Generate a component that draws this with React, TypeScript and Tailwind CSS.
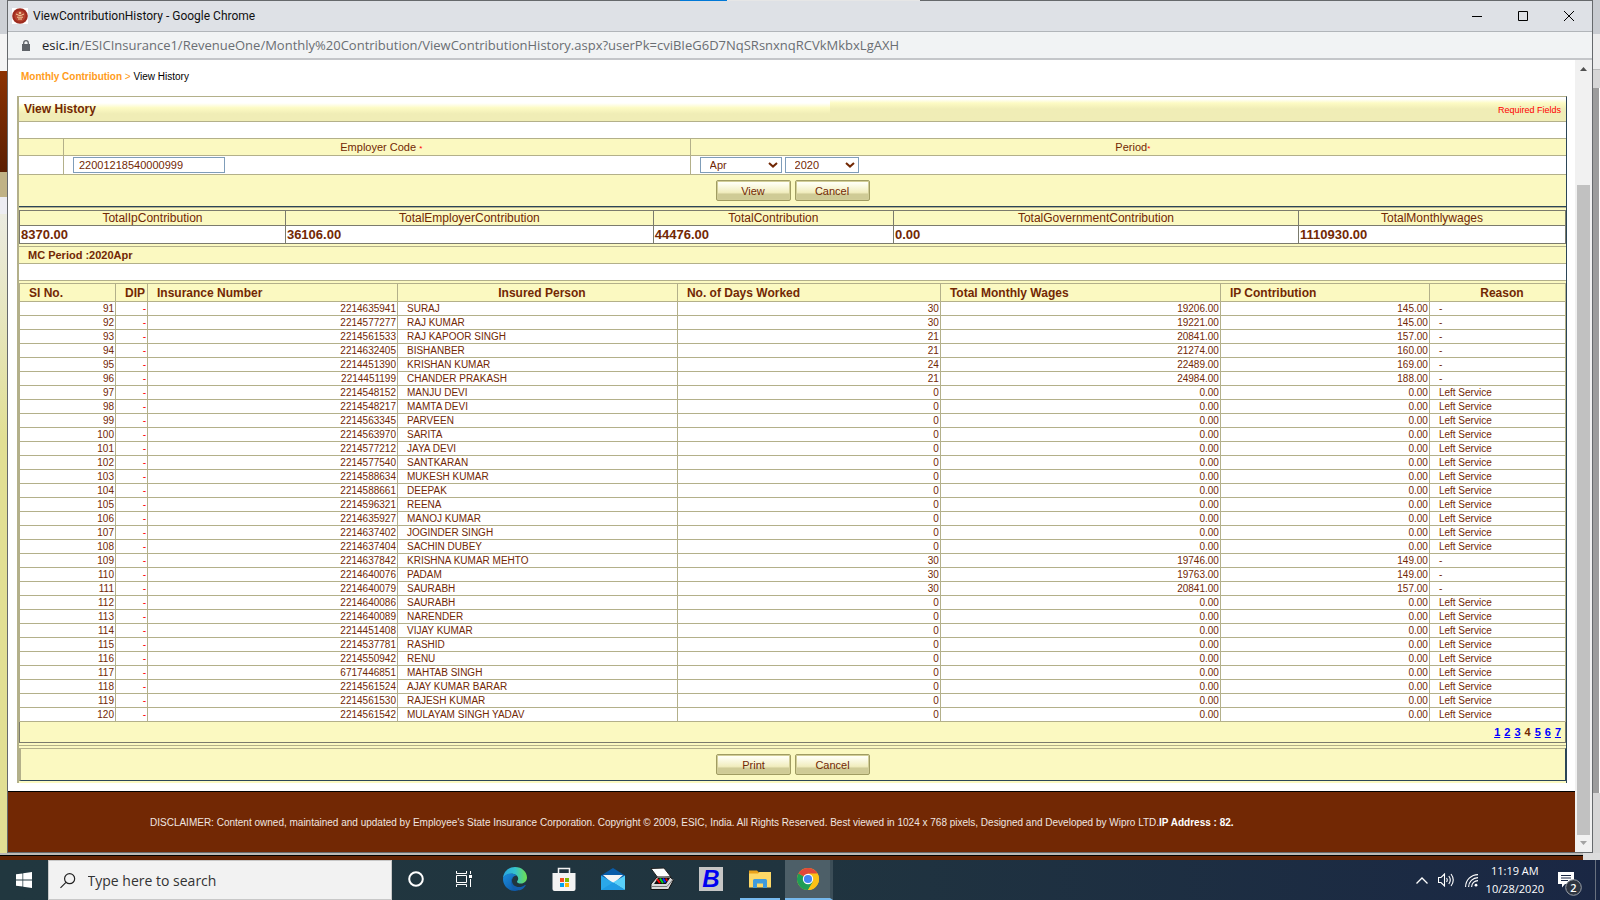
import type { ReactNode } from "react";

type Person = [string, string, string?, string?, string?];

const people: Person[] = [
  ["2214635941", "SURAJ", "30", "19206.00", "145.00"],
  ["2214577277", "RAJ KUMAR", "30", "19221.00", "145.00"],
  ["2214561533", "RAJ KAPOOR SINGH", "21", "20841.00", "157.00"],
  ["2214632405", "BISHANBER", "21", "21274.00", "160.00"],
  ["2214451390", "KRISHAN KUMAR", "24", "22489.00", "169.00"],
  ["2214451199", "CHANDER PRAKASH", "21", "24984.00", "188.00"],
  ["2214548152", "MANJU DEVI"],
  ["2214548217", "MAMTA DEVI"],
  ["2214563345", "PARVEEN"],
  ["2214563970", "SARITA"],
  ["2214577212", "JAYA DEVI"],
  ["2214577540", "SANTKARAN"],
  ["2214588634", "MUKESH KUMAR"],
  ["2214588661", "DEEPAK"],
  ["2214596321", "REENA"],
  ["2214635927", "MANOJ KUMAR"],
  ["2214637402", "JOGINDER SINGH"],
  ["2214637404", "SACHIN DUBEY"],
  ["2214637842", "KRISHNA KUMAR MEHTO", "30", "19746.00", "149.00"],
  ["2214640076", "PADAM", "30", "19763.00", "149.00"],
  ["2214640079", "SAURABH", "30", "20841.00", "157.00"],
  ["2214640086", "SAURABH"],
  ["2214640089", "NARENDER"],
  ["2214451408", "VIJAY KUMAR"],
  ["2214537781", "RASHID"],
  ["2214550942", "RENU"],
  ["6717446851", "MAHTAB SINGH"],
  ["2214561524", "AJAY KUMAR BARAR"],
  ["2214561530", "RAJESH KUMAR"],
  ["2214561542", "MULAYAM SINGH YADAV"],
];

const totals = [
  ["TotalIpContribution", "8370.00"],
  ["TotalEmployerContribution", "36106.00"],
  ["TotalContribution", "44476.00"],
  ["TotalGovernmentContribution", "0.00"],
  ["TotalMonthlywages", "1110930.00"],
];

const ui = "font-['Open_Sans','Noto_Sans',sans-serif]";

function FormButton({ children }: { children: ReactNode }) {
  return (
    <button
      type="button"
      className="h-[21px] w-[75px] rounded-[2px] border border-[#a09c62] bg-linear-to-b from-[#fffff4] from-10% via-[#f1edbf] via-60% to-[#cfcb96] to-70% text-[11px] leading-[18px] text-[#722804] shadow-[inset_0_0_0_1px_#d2ce98]"
    >
      {children}
    </button>
  );
}

function PeriodSelect({ label, options, className }: { label: string; options: string[]; className: string }) {
  return (
    <span className="grid items-center">
      <select
        aria-label={label}
        className={`col-start-1 row-start-1 h-4 appearance-none rounded-none border border-[#7f9db9] bg-white pl-[9px] text-[11px] leading-[14px] text-[#722804] ${className}`}
      >
        {options.map((o) => (
          <option key={o}>{o}</option>
        ))}
      </select>
      <svg viewBox="0 0 10 6" className="pointer-events-none col-start-1 row-start-1 mr-[4px] h-[6px] w-[10px] justify-self-end">
        <path d="M1 1l4 3.6L9 1" fill="none" stroke="#722804" strokeWidth="2" />
      </svg>
    </span>
  );
}

function TitleBar() {
  return (
    <header className={`flex h-[31px] items-center border-b border-[#b1b5b9] bg-[#dee1e6] pl-1 ${ui}`}>
      <svg viewBox="0 0 16 16" className="h-4 w-4">
        <path fill="#fff" d="M0 0h16v16H0z" />
        <circle cx="8" cy="8" r="7.8" fill="#9d2b1e" />
        <circle cx="8" cy="8" r="5.6" fill="#b8432e" />
        <path d="M4 6l3 1.4h2L12 6M5 9.2h6M6 11h4" stroke="#f2d3a0" fill="none" />
        <circle cx="8" cy="5" r="1.3" fill="#e7b98a" />
      </svg>
      <h1 className="ml-[5px] flex-1 font-[Roboto,sans-serif] text-[12px] text-[#111]">ViewContributionHistory - Google Chrome</h1>
      <div className="flex">
        <button type="button" aria-label="Minimize" className="grid h-[30px] w-[46px] place-items-center">
          <svg viewBox="0 0 10 10" className="h-[10px] w-[10px]"><path d="M0 5.5h10" stroke="#000" /></svg>
        </button>
        <button type="button" aria-label="Maximize" className="grid h-[30px] w-[46px] place-items-center">
          <svg viewBox="0 0 10 10" className="h-[10px] w-[10px]"><path d="M.5.5h9v9h-9z" fill="none" stroke="#000" /></svg>
        </button>
        <button type="button" aria-label="Close" className="grid h-[30px] w-[46px] place-items-center">
          <svg viewBox="0 0 10 10" className="h-[10px] w-[10px]"><path d="M0 0l10 10M10 0L0 10" stroke="#000" /></svg>
        </button>
      </div>
    </header>
  );
}

function AddressBar() {
  return (
    <div className={`flex h-[28px] items-center border-b-2 border-[#c4c6c9] bg-[#f1f3f4] pl-[14px] ${ui}`}>
      <svg viewBox="0 0 8 11" className="h-[11px] w-[8px]">
        <path d="M0 4h8v7H0z" fill="#5f6368" />
        <path d="M1.7 4.5V3a2.3 2.3 0 0 1 4.6 0v1.5" fill="none" stroke="#5f6368" strokeWidth="1.3" />
      </svg>
      <p className="ml-3 text-[13px] leading-5 whitespace-nowrap text-[#6a6e73]">
        <span className="text-[#202124]">esic.in</span>
        /ESICInsurance1/RevenueOne/Monthly%20Contribution/ViewContributionHistory.aspx?userPk=cviBIeG6D7NqSRsnxnqRCVkMkbxLgAXH
      </p>
    </div>
  );
}

function SearchForm() {
  return (
    <form onSubmit={(e) => e.preventDefault()}>
      <div className="flex h-[25px] border-b border-[#b3b08a]">
        <div className="flex w-[52.4%] items-center bg-linear-to-b from-white from-25% via-[#fdfbc4] via-45% to-[#f0edb6] to-70% pl-[5px]">
          <h2 className="text-[12px] font-bold">View History</h2>
        </div>
        <div className="flex flex-1 items-center justify-end bg-linear-to-b from-white from-8% via-[#fdfbc4] via-25% to-[#f0edb6] to-50% pt-1 pr-[5px] text-[9px] text-[#ff0000]">
          Required Fields
        </div>
      </div>
      <div className="h-[17px] border-b border-[#b3b08a] bg-white" />
      <div className="grid grid-cols-[45px_627fr_876fr] text-[11px]">
        <div className="h-[17px] border-r border-b border-[#b3b08a]" />
        <label htmlFor="employer" className="h-[17px] border-r border-b border-[#b3b08a] pl-[9px] text-center leading-4">
          Employer Code <span className="text-[8px] text-[#ff0000]">*</span>
        </label>
        <div className="h-[17px] border-b border-[#b3b08a] pl-[9px] text-center leading-4">
          Period<span className="text-[8px] text-[#ff0000]">*</span>
        </div>
        <div className="h-[19px] border-r border-b border-[#b3b08a] bg-white" />
        <div className="flex h-[19px] items-center border-r border-b border-[#b3b08a] bg-white pl-[9px]">
          <input
            id="employer"
            defaultValue="22001218540000999"
            className="h-4 w-[152px] border border-[#7f9db9] bg-white px-[5px] text-[11px] leading-[14px] text-[#722804]"
          />
        </div>
        <div className="flex h-[19px] items-center gap-[3px] border-b border-[#b3b08a] bg-white pl-[9px]">
          <PeriodSelect label="Month" options={["Apr", "May", "Jun"]} className="w-[82px]" />
          <PeriodSelect label="Year" options={["2020", "2019"]} className="w-[74px]" />
        </div>
      </div>
      <div className="flex h-8 items-center justify-center gap-1 border-b border-[#2b4557]">
        <FormButton>View</FormButton>
        <FormButton>Cancel</FormButton>
      </div>
    </form>
  );
}

function TotalsTable() {
  return (
    <table className="w-full table-fixed border-separate border-spacing-0 border-t border-l border-[#7b7b6d]">
      <colgroup>
        <col className="w-[17.2%]" />
        <col className="w-[23.8%]" />
        <col className="w-[15.53%]" />
        <col className="w-[26.2%]" />
        <col />
      </colgroup>
      <thead>
        <tr>
          {totals.map(([name]) => (
            <th key={name} className="h-[15px] border-r border-b border-[#7b7b6d] p-0 text-center text-[12px] leading-[14px] font-normal">
              {name}
            </th>
          ))}
        </tr>
      </thead>
      <tbody>
        <tr>
          {totals.map(([name, value]) => (
            <td key={name} className="h-[18px] border-r border-b border-[#7b7b6d] bg-white p-0 pt-px pl-px text-[13px] leading-4 font-bold">
              {value}
            </td>
          ))}
        </tr>
      </tbody>
    </table>
  );
}

const head = "h-[18px] border-r border-b border-[#b3b08a] p-0 pt-[2px] text-[12px] leading-[15px] font-bold whitespace-nowrap";
const cell = "h-[14px] border-r border-b border-[#b3b08a] p-0 leading-[13px] whitespace-nowrap";

function ContributionTable() {
  return (
    <table className="w-full table-fixed border-separate border-spacing-0 border-t border-l border-[#b3b08a]">
      <colgroup>
        <col className="w-[6.21%]" />
        <col className="w-[2.07%]" />
        <col className="w-[16.17%]" />
        <col className="w-[18.11%]" />
        <col className="w-[17.01%]" />
        <col className="w-[18.11%]" />
        <col className="w-[13.52%]" />
        <col />
      </colgroup>
      <thead>
        <tr>
          <th className={`${head} pl-[9px] text-left`}>SI No.</th>
          <th className={`${head} pr-[2px] text-right`}>DIP</th>
          <th className={`${head} pl-[9px] text-left`}>Insurance Number</th>
          <th className={`${head} pl-[9px] text-center`}>Insured Person</th>
          <th className={`${head} pl-[9px] text-left`}>No. of Days Worked</th>
          <th className={`${head} pl-[9px] text-left`}>Total Monthly Wages</th>
          <th className={`${head} pl-[9px] text-left`}>IP Contribution</th>
          <th className={`${head} pl-[9px] text-center`}>Reason</th>
        </tr>
      </thead>
      <tbody className="bg-white text-[10px]">
        {people.map(([number, name, days, wages, share], i) => (
          <tr key={number}>
            <td className={`${cell} pr-px text-right`}>{91 + i}</td>
            <td className={`${cell} pr-px text-right text-[#ff0000]`}>-</td>
            <td className={`${cell} pr-px text-right`}>{number}</td>
            <td className={`${cell} pl-[9px] text-left`}>{name}</td>
            <td className={`${cell} pr-px text-right`}>{days ?? "0"}</td>
            <td className={`${cell} pr-px text-right`}>{wages ?? "0.00"}</td>
            <td className={`${cell} pr-px text-right`}>{share ?? "0.00"}</td>
            <td className={`${cell} pl-[9px] text-left`}>{days ? "-" : "Left Service"}</td>
          </tr>
        ))}
      </tbody>
    </table>
  );
}

function Pager() {
  return (
    <nav className="flex h-[21px] items-center justify-end gap-1 border-r border-b border-l border-[#7b7b6d] pr-1 text-[11px] font-bold">
      {[1, 2, 3, 4, 5, 6, 7].map((n) =>
        n === 4 ? (
          <span key={n}>4</span>
        ) : (
          <a key={n} href={`#page-${n}`} className="text-[#0000ff] underline">{n}</a>
        ),
      )}
    </nav>
  );
}

function Page() {
  return (
    <div className="flex min-w-0 flex-1 flex-col bg-white font-['Liberation_Sans',Arial,sans-serif] text-[#722804]">
      <p className="px-[13px] pt-[9px] pb-[12px] text-[10px] leading-[15px] text-black">
        <a href="#monthly" className="font-bold text-[#ff9c1a]">Monthly Contribution</a>
        <span className="text-[#ff9c1a]"> &gt; </span>View History
      </p>
      <main className="mr-2 ml-[9px] border-t border-r border-l-2 border-t-[#b3b08a] border-r-[#2b4557] border-l-[#b3b08a] bg-[#fbf9c1]">
        <SearchForm />
        <div className="border-t border-[#b3b08a] pt-[2px] pb-[2px]">
          <TotalsTable />
        </div>
        <h3 className="h-[18px] border-t border-b border-[#b3b08a] pl-[9px] text-[11px] leading-4 font-bold">MC Period :2020Apr</h3>
        <div className="h-[17px] border-b border-[#b3b08a] bg-white" />
        <div className="pt-[2px] pb-[2px]">
          <ContributionTable />
          <Pager />
        </div>
        <div className="border-t border-[#b3b08a] pt-[2px] pb-[2px]">
          <div className="flex h-[33px] items-center justify-center gap-1 border-t border-r border-b border-l-2 border-t-[#b3b08a] border-r-[#2b4557] border-b-[#2b4557] border-l-[#b3b08a]">
            <FormButton>Print</FormButton>
            <FormButton>Cancel</FormButton>
          </div>
        </div>
      </main>
      <footer className="mt-2 flex flex-1 items-center border-t border-black bg-[#722804] pl-[142px] text-[10px] whitespace-nowrap text-[#f0e6e0]">
        <p>
          DISCLAIMER: Content owned, maintained and updated by Employee's State Insurance Corporation. Copyright © 2009, ESIC, India. All Rights Reserved. Best viewed in 1024 x 768 pixels, Designed and Developed by Wipro LTD.
          <b className="text-white">IP Address : 82.</b>
        </p>
      </footer>
    </div>
  );
}

function ScrollBar() {
  return (
    <div className="flex w-[17px] flex-col items-center bg-[#f1f1f1]">
      <svg viewBox="0 0 17 17" className="h-[17px] w-[17px]"><path d="M5 11h7L8.500 7z" fill="#505050" /></svg>
      <div className="mt-[108px] w-[13px] flex-1 bg-[#c1c1c1]" />
      <svg viewBox="0 0 17 17" className="h-[17px] w-[17px]"><path d="M5 6h7L8.500 10z" fill="#a3a3a3" /></svg>
    </div>
  );
}

function Taskbar() {
  const slot = "flex h-10 w-12 items-center justify-center border-b-2 border-transparent";
  return (
    <footer className={`flex h-10 items-center bg-linear-to-r from-[#21373f] via-[#20343f] via-50% to-[#1a2744] ${ui}`}>
      <button type="button" aria-label="Start" className="grid h-10 w-12 place-items-center">
        <svg viewBox="0 0 16 16" className="h-4 w-4">
          <path fill="#fff" d="M0 2.300l6.500-.9v6.200H0zM7.200 1.300L16 0v7.600H7.200zM0 8.400h6.500v6.200L0 13.700zM7.200 8.400H16V16l-8.800-1.300z" />
        </svg>
      </button>
      <label className="flex h-10 w-[344px] items-center border border-[#c8c8c8] bg-[#f2f2f2] pl-[11px]">
        <svg viewBox="0 0 17 17" className="h-[17px] w-[17px]">
          <circle cx="10.500" cy="6.500" r="5.500" fill="none" stroke="#222" strokeWidth="1.300" />
          <path d="M6.500 10.500L.5 16.500" stroke="#222" strokeWidth="1.300" />
        </svg>
        <input
          type="text"
          aria-label="Search"
          placeholder="Type here to search"
          className="ml-3 w-full bg-transparent text-[14px] text-[#333] outline-none placeholder:text-[#333]"
        />
      </label>
      <div className="flex">
        <button type="button" aria-label="Cortana" className={slot}>
          <svg viewBox="0 0 16 16" className="h-4 w-4"><circle cx="8" cy="8" r="6.800" fill="none" stroke="#fff" strokeWidth="2" /></svg>
        </button>
        <button type="button" aria-label="Task view" className={slot}>
          <svg viewBox="0 0 16 16" className="h-4 w-4" fill="none" stroke="#fff">
            <path d="M.5 0v2.500h10V0M.5 4.500h10v7H.5zM.5 16v-2.500h10V16M14.500 0v3M14.500 8v8" />
            <path d="M13 4h3v3h-3z" fill="#fff" stroke="none" />
          </svg>
        </button>
      </div>
      <div className="ml-[3px] flex gap-px">
        <button type="button" aria-label="Edge" className={slot}>
          <svg viewBox="0 0 24 24" className="h-6 w-6">
            <defs>
              <linearGradient id="edgeTop" x1="0" x2="1"><stop offset="0" stopColor="#2aa6e0" /><stop offset=".5" stopColor="#35c1cf" /><stop offset="1" stopColor="#6fe04e" /></linearGradient>
              <linearGradient id="edgeLow" x1="0" x2="1" y2="1"><stop offset="0" stopColor="#1b8ede" /><stop offset="1" stopColor="#0c50a0" /></linearGradient>
            </defs>
            <path d="M0 11C.6 4.500 5.800 0 12 0c7 0 12 5 12 10.500 0 3.500-2.800 6-6 6-2.500 0-4-.8-4-1.800 0-.7 1.200-1.200 1.200-3.200 0-2.500-3-4.700-6.700-4.700C4.500 6.800 1 8.800 0 11z" fill="url(#edgeTop)" />
            <path d="M0 12c0-3 3.600-5.600 8.200-5.600 2 0 4 .7 5.300 2-2.500.2-5 2.700-5 6 0 5 4.500 9 9 7.600-1.600 1.200-3.600 2-5.500 2C5.400 24 0 18.600 0 12z" fill="url(#edgeLow)" />
            <path d="M10.500 9.300c-3 4-1.500 9.700 4 10.700 3.200.5 5.500-.8 7.500-2 .6-.3 1 .1.700.6-1.300 2.200-3.400 4-5.700 4.700-5 .3-9-3-9-8 0-2.500 1-4.700 2.500-6z" fill="#145fae" />
          </svg>
        </button>
        <button type="button" aria-label="Store" className={slot}>
          <svg viewBox="0 0 24 24" className="h-6 w-6">
            <path d="M6.500 7V1.500h11V7" fill="none" stroke="#f3f3f3" strokeWidth="1.500" />
            <path d="M.5 6h23v16q0 2-2 2h-19q-2 0-2-2z" fill="#f3f3f3" />
            <path d="M8 11h4v4H8z" fill="#f25022" /><path d="M13 11h4v4h-4z" fill="#7fba00" />
            <path d="M8 16h4v4H8z" fill="#00a4ef" /><path d="M13 16h4v4h-4z" fill="#ffb900" />
          </svg>
        </button>
        <button type="button" aria-label="Mail" className={slot}>
          <svg viewBox="0 0 24 24" className="h-6 w-6">
            <path d="M0 8.500L12 1l12 7.500V14H0z" fill="#0a5ca8" />
            <path d="M2 8h20l-10 9z" fill="#f5f5f5" />
            <path d="M0 8.500l12 7 12 7.500H0z" fill="#2aa8ea" />
            <path d="M24 8.500V23L12 15.500z" fill="#58d0fa" />
            <path d="M0 23l12-7.500L24 23z" fill="#1f9be4" />
          </svg>
        </button>
        <button type="button" aria-label="Scanner" className={slot}>
          <svg viewBox="0 0 24 24" className="h-6 w-6">
            <path d="M1 1.500L14 1l7 9-13 1z" fill="#fff" stroke="#222" />
            <path d="M1 17L7 10h13l3.500 3-5 9.500H1z" fill="#d8d8d8" stroke="#111" />
            <path d="M4 17l4-6h12l-4 6z" fill="#101010" />
            <path d="M7 12l3 4" stroke="#f00" strokeWidth="2" /><path d="M10 11.500l3 4.500" stroke="#00d020" strokeWidth="2" />
            <path d="M13 11.500l2.500 4" stroke="#1030ff" strokeWidth="2" /><path d="M16 11.500l1 2.500" stroke="#e00" strokeWidth="2" />
            <path d="M1 19.500h16l6-7" fill="none" stroke="#777" />
          </svg>
        </button>
        <button type="button" aria-label="B application" className={slot}>
          <span className="h-6 w-6 bg-[#c6c6c6] font-['Liberation_Sans',sans-serif] text-[24px] leading-6 font-bold text-[#0000f0] italic">B</span>
        </button>
        <button type="button" aria-label="File Explorer" className="mx-1 flex h-10 w-10 items-center justify-center border-b-2 border-[#76b9ed]">
          <svg viewBox="0 0 24 24" className="h-6 w-6">
            <path d="M1 3.500h8l2 2h12V20H1z" fill="#e9a21b" />
            <path d="M1 6.500h9l1.500-1.500H23v15.500H1z" fill="#fdd867" />
            <path d="M5 21v-7.500q0-1.500 1.500-1.500h11q1.500 0 1.500 1.500V21h-4v-4.500H9V21z" fill="#3f9bdc" />
          </svg>
        </button>
        <button type="button" aria-label="Chrome" className="flex h-10 w-12 items-center justify-center border-r-3 border-b-2 border-r-[#3c4e58] border-b-[#76b9ed] bg-[#4d5f68]">
          <svg viewBox="0 0 24 24" className="h-6 w-6">
            <circle cx="12" cy="12" r="11" fill="#fbc116" />
            <path d="M12 12L2.470 6.500A11 11 0 0 1 21.530 6.500z" fill="#e0483a" />
            <path d="M12 12L2.470 6.500A11 11 0 0 0 12 23l5-8.500z" fill="#1f9d55" />
            <path d="M12 6.500h9.530A11 11 0 0 1 12 23l5-8z" fill="#fbc116" />
            <circle cx="12" cy="12" r="5.200" fill="#fff" /><circle cx="12" cy="12" r="4.100" fill="#4285f4" />
          </svg>
        </button>
      </div>
      <div className="ml-auto flex h-10 items-center text-white">
        <button type="button" aria-label="Show hidden icons" className="mr-[10px]">
          <svg viewBox="0 0 12 7" className="h-[7px] w-3"><path d="M.5 6.500L6 1l5.500 5.500" fill="none" stroke="#fff" strokeWidth="1.300" /></svg>
        </button>
        <button type="button" aria-label="Volume" className="mr-[10px]">
          <svg viewBox="0 0 17 14" className="h-[14px] w-[17px]" fill="none" stroke="#fff" strokeWidth="1.100">
            <path d="M.5 4.500h2.500l3.500-3.500v12L3 9.500H.5zM8.500 5q1.500 2 0 4M10.800 3q3 4 0 8M13 1q4.500 6 0 12" />
          </svg>
        </button>
        <button type="button" aria-label="Network" className="mr-2">
          <svg viewBox="0 0 13 13" className="h-[13px] w-[13px]" fill="none" stroke="#fff" strokeWidth="1.100">
            <path d="M.6 13A12.400 12.400 0 0 1 13 .6M3.600 13A9.400 9.400 0 0 1 13 3.600M6.600 13A6.400 6.400 0 0 1 13 6.600" />
            <circle cx="11" cy="11.200" r="1.400" fill="#fff" stroke="none" />
          </svg>
        </button>
        <time className="text-center text-[11px] leading-[18px]">
          11:19 AM<br />10/28/2020
        </time>
        <button type="button" aria-label="Notifications, 2 new" className="mr-3 ml-[14px]">
          <svg viewBox="0 0 25 25" className="mt-[6px] h-[25px] w-[25px]">
            <path d="M0 1h16v12H7l-3 3.500V13H0z" fill="#fff" />
            <path d="M3 4.500h10M3 7h10M3 9.500h7" stroke="#1a2744" />
            <circle cx="15.500" cy="16.500" r="7.800" fill="#2e3440" stroke="#9aa0a8" />
            <text x="15.500" y="20.500" textAnchor="middle" fontSize="11" fontWeight="600" fill="#fff">2</text>
          </svg>
        </button>
        <span className="mr-1 h-10 w-px bg-[#69717f]" />
      </div>
    </footer>
  );
}

export default function App() {
  return (
    <div className="flex min-h-screen flex-col overflow-hidden">
      <div className="flex flex-1">
        <div className="flex w-[7px] flex-col">
          <div className="h-[34px] bg-[#cdd0d5]" />
          <div className="h-[37px] bg-[#f4f4f4]" />
          <div className="h-[101px] bg-linear-to-b from-[#8c3202] to-[#5c1f02]" />
          <div className="h-[25px] bg-[#c0b285]" />
          <div className="h-[17px] bg-[#ededf2]" />
          <div className="flex-1 bg-linear-to-b from-[#ebebe0] to-[#e2df94] to-35%" />
        </div>
        <div className="flex min-w-0 flex-1 flex-col border-r border-b border-l border-[#66696c]">
          <div className="flex h-px bg-[#66696c]">
            <div className="ml-[42.4%] w-[3%] bg-[#0078d7]" />
            <div className="w-[12.2%] bg-[#e6e6e6]" />
          </div>
          <TitleBar />
          <AddressBar />
          <div className="flex flex-1">
            <Page />
            <ScrollBar />
          </div>
        </div>
        <div className="flex w-[7px] flex-col">
          <div className="h-[34px] bg-[#c9ccd1]" />
          <div className="h-[36px] border-b border-[#bbb] bg-[#ececec]" />
          <div className="h-[18px] bg-[#d6d6d6]" />
          <div className="mr-[1px] h-[705px] bg-[#9c9c9c]" />
          <div className="flex-1 bg-[#d6d6d6]" />
        </div>
      </div>
      <div className="bg-[#dcdcdc] pr-[17px]">
        <div className="h-[7px] border-t-2 border-[#bcb9b6] bg-[#642303]">
          <div className="h-px bg-black" />
        </div>
      </div>
      <Taskbar />
    </div>
  );
}
